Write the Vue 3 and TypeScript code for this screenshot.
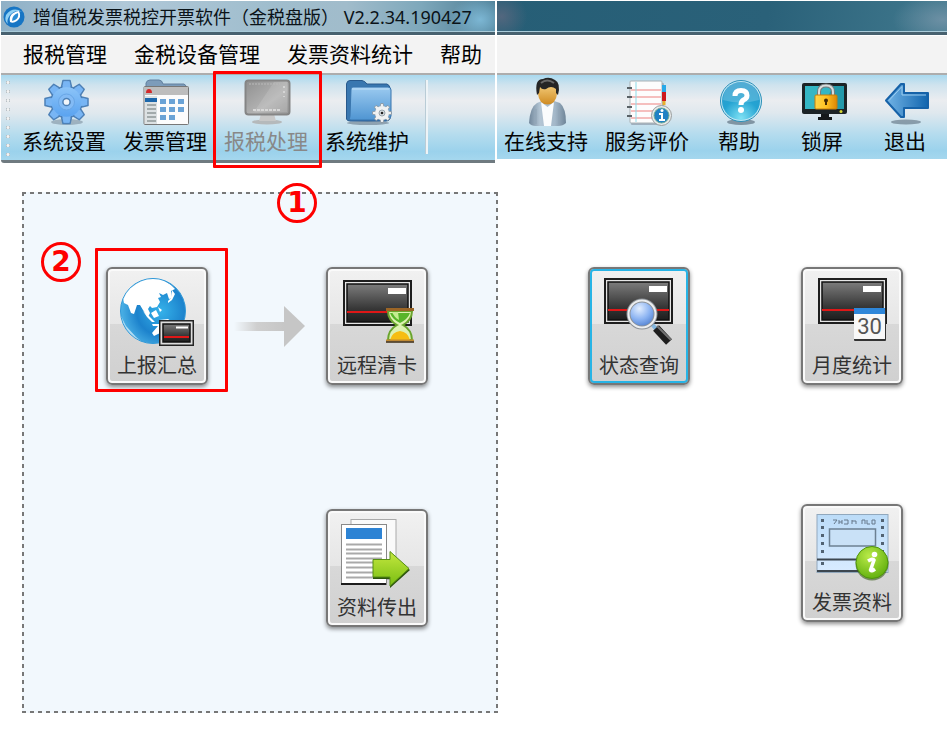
<script setup lang="ts">
interface Action {
  id: string
  label: string
  disabled?: boolean
  marked?: boolean
  day?: string
}

const menus: string[] = ['报税管理', '金税设备管理', '发票资料统计', '帮助']

const mainTools: Action[] = [
  { id: 'gear', label: '系统设置' },
  { id: 'invoices', label: '发票管理' },
  { id: 'monitor', label: '报税处理', disabled: true, marked: true },
  { id: 'folder', label: '系统维护' },
]

const sideTools: Action[] = [
  { id: 'person', label: '在线支持' },
  { id: 'notebook', label: '服务评价' },
  { id: 'help', label: '帮助' },
  { id: 'lock', label: '锁屏' },
  { id: 'exit', label: '退出' },
]

const queryTiles: Action[] = [
  { id: 'status', label: '状态查询', marked: true },
  { id: 'month', label: '月度统计', day: '30' },
  { id: 'paper', label: '发票资料' },
]

const teeth: number[] = [0, 45, 90, 135, 180, 225, 270, 315]
const lineRows: number[] = [35, 40, 44, 49, 53, 58, 63, 68]
const holes: number[] = [16, 23, 31, 39, 47]
</script>

<template>
  <svg class="sprite" aria-hidden="true">
    <defs>
      <linearGradient id="gBlue" x1="0" y1="0" x2="0" y2="1"><stop offset="0" stop-color="#8cc4f8" /><stop offset="1" stop-color="#5aa3f0" /></linearGradient>
      <linearGradient id="gFolder" x1="0" y1="0" x2="0" y2="1"><stop offset="0" stop-color="#9bcaf0" /><stop offset="1" stop-color="#4f95d2" /></linearGradient>
      <linearGradient id="gGrey" x1="0" y1="0" x2="1" y2="1"><stop offset="0" stop-color="#8f8f8f" /><stop offset=".6" stop-color="#b4b4b4" /><stop offset="1" stop-color="#989898" /></linearGradient>
      <linearGradient id="gDevice" x1="0" y1="0" x2="0" y2="1"><stop offset="0" stop-color="#7c7c7c" /><stop offset=".65" stop-color="#373737" /><stop offset="1" stop-color="#1d1d1d" /></linearGradient>
      <radialGradient id="gGlobe" cx=".62" cy=".5" r=".62"><stop offset="0" stop-color="#35b2ea" /><stop offset=".6" stop-color="#1c82cc" /><stop offset="1" stop-color="#4cb2e6" /></radialGradient>
      <linearGradient id="gSuit" x1="0" y1="0" x2="1" y2="0"><stop offset="0" stop-color="#71879b" /><stop offset=".3" stop-color="#b3c5d4" /><stop offset=".7" stop-color="#a4b8c9" /><stop offset="1" stop-color="#6f8598" /></linearGradient>
      <linearGradient id="gFace" x1="0" y1="0" x2="0" y2="1"><stop offset="0" stop-color="#efc470" /><stop offset="1" stop-color="#cf8b22" /></linearGradient>
      <radialGradient id="gHelp" cx=".5" cy=".95" r=".9"><stop offset="0" stop-color="#7fe1f4" /><stop offset=".55" stop-color="#24a3d2" /><stop offset="1" stop-color="#2a9acb" /></radialGradient>
      <linearGradient id="gExit" x1="0" y1="0" x2="1" y2="0"><stop offset="0" stop-color="#72b4e6" /><stop offset="1" stop-color="#1265ae" /></linearGradient>
      <linearGradient id="gGold" x1="0" y1="0" x2="1" y2="0"><stop offset="0" stop-color="#ffd54a" /><stop offset=".5" stop-color="#ffc222" /><stop offset="1" stop-color="#dd8605" /></linearGradient>
      <linearGradient id="gGreen" x1="0" y1="0" x2="0" y2="1"><stop offset="0" stop-color="#c5e83f" /><stop offset="1" stop-color="#78bd12" /></linearGradient>
      <radialGradient id="gInfo" cx=".4" cy=".3" r=".75"><stop offset="0" stop-color="#b9ea48" /><stop offset="1" stop-color="#5fae0c" /></radialGradient>
      <radialGradient id="gLens" cx=".4" cy=".3" r=".8"><stop offset="0" stop-color="#e2eeff" /><stop offset=".5" stop-color="#8bb3f2" /><stop offset="1" stop-color="#3d6fc4" /></radialGradient>
      <linearGradient id="gPaper" x1="0" y1="0" x2="0" y2="1"><stop offset="0" stop-color="#bcdcf8" /><stop offset="1" stop-color="#d8ebff" /></linearGradient>
      <linearGradient id="gFlow" x1="0" y1="0" x2="1" y2="0"><stop offset="0" stop-color="#cfcfcf" stop-opacity="0" /><stop offset=".45" stop-color="#cfcfcf" /><stop offset="1" stop-color="#c6c6c6" /></linearGradient>
    </defs>

    <symbol id="gear" viewBox="0 0 48 48" overflow="visible">
      <ellipse cx="27" cy="44" rx="16" ry="3" fill="#456" opacity=".35" />
      <g fill="#78b5f4" stroke="#4d80b6" stroke-width="1.500">
        <path v-for="a in teeth" :key="a" d="M21 11 L23 2.500 H30 L32 11 Z" :transform="`rotate(${a} 26.5 24)`" stroke-linejoin="round" />
        <circle cx="26.500" cy="24" r="15.500" />
      </g>
      <path v-for="a in teeth" :key="'t' + a" d="M22 12 L23.700 3.500 H29.300 L31 12 Z" :transform="`rotate(${a} 26.5 24)`" fill="#78b5f4" />
      <circle cx="26.500" cy="24" r="14.800" fill="url(#gBlue)" />
      <circle cx="26.500" cy="24" r="8" fill="#83bbf5" stroke="#68a6e6" />
      <circle cx="26.500" cy="24" r="3.600" fill="#f2f6fa" stroke="#4d80b6" stroke-width="1.500" />
    </symbol>

    <symbol id="invoices" viewBox="0 0 48 48" overflow="visible">
      <path d="M5 12 V5 Q6 2 9 2 H18 Q21 2 22 6 H43 Q46 7 46 12Z" fill="#7d9cba" stroke="#607f9e" />
      <rect x="3" y="8.500" width="44.500" height="38" rx="1" fill="#fcfcfc" stroke="#777" />
      <rect x="3.500" y="9" width="43.500" height="8" fill="#bdbdbd" />
      <path d="M5 15 Q5 11 8 11 Q11 11 11 15Z" fill="#d3292a" />
      <rect x="4" y="18" width="12" height="28" fill="#dce1e3" />
      <rect x="4" y="20" width="12" height="4" fill="#1c67ab" />
      <path d="M6 27H15M6 31H15M6 35H15M6 39H15M6 43H15" stroke="#8e9899" stroke-width="1.500" />
      <g fill="#6ba3d6"><rect x="19" y="21" width="6" height="5" /><rect x="28" y="21" width="6" height="5" /><rect x="37" y="21" width="6" height="5" /><rect x="19" y="29" width="6" height="5" /><rect x="28" y="29" width="6" height="5" /><rect x="37" y="29" width="6" height="5" /><rect x="19" y="37" width="6" height="5" /><rect x="28" y="37" width="6" height="5" /></g>
    </symbol>

    <symbol id="monitor" viewBox="0 0 48 48" overflow="visible">
      <ellipse cx="25" cy="44" rx="15" ry="2.500" fill="#b5b9bb" />
      <path d="M19 36 H32 L34 43 H17Z" fill="#c8c8c8" />
      <rect x="3.500" y="2.500" width="44" height="34" rx="3" fill="url(#gGrey)" stroke="#858585" stroke-width="2" />
      <path d="M32 4 H45 V34 H12Z" fill="#fff" opacity=".12" />
      <path d="M7 6H38" stroke="#bababa" stroke-dasharray="2 1" />
      <path d="M11 32H39" stroke="#d8d8d8" stroke-width="2" stroke-dasharray="3 1" />
      <path d="M42 8V19" stroke="#d5d5d5" stroke-width="2" stroke-dasharray="2 3" />
    </symbol>

    <symbol id="folder" viewBox="0 0 48 48" overflow="visible">
      <ellipse cx="25" cy="45" rx="21" ry="2" fill="#345" opacity=".4" />
      <path d="M3.500 41 V6 Q4 2.500 7 2.500 H19 Q22 3 24 6 H44 Q47 7 47 11 V41 Q46 43 43 43 H7 Q4 43 3.500 41Z" fill="#3977b0" stroke="#28598c" />
      <path d="M8 11 Q8 9 10 9 H45 Q48 9 48 12 V38 Q47 42 44 42 H7 Q6 41 7 38Z" fill="url(#gFolder)" stroke="#3975ad" />
      <path d="M9 11H46" stroke="#c1e0f8" />
      <g fill="#f0f2f3" stroke="#87929b" stroke-width=".8">
        <path v-for="a in teeth" :key="a" d="M37 29 L37.800 25.500 H40.200 L41 29Z" :transform="`rotate(${a} 39 35)`" />
      </g>
      <circle cx="39" cy="35" r="7" fill="#f0f2f3" />
      <circle cx="39" cy="35" r="3" fill="#d8dee2" stroke="#98a4ad" /><circle cx="39" cy="35" r="1.300" fill="#222" />
    </symbol>

    <symbol id="person" viewBox="0 0 48 48" overflow="visible">
      <path d="M7 45 Q8 29 15 25 L20 23 H32 L38 25 Q44 30 44 45 Q41 48 36 48 H14 Q9 48 7 45Z" fill="url(#gSuit)" />
      <path d="M19 24 L25.500 29 L32 24 L29 48 H22Z" fill="#fafcfd" />
      <path d="M14 31V46M37 31V46" stroke="#8fa3b4" />
      <path d="M16 9 H35 V16 Q34 26 25.500 26.500 Q17 26 16 16Z" fill="url(#gFace)" />
      <path d="M15 17 Q12 1 21 1 Q27 -2 33 2 Q39 5 36 17 L34 15 V11 Q29 7 24 11 Q20 12 18 9 L17 15Z" fill="#252525" />
      <path d="M19 5 Q25 0 32 5" stroke="#686868" stroke-width="2" fill="none" />
    </symbol>

    <symbol id="notebook" viewBox="0 0 48 48" overflow="visible">
      <rect x="8" y="5" width="33" height="42" rx="1" fill="#556" opacity=".35" />
      <rect x="7" y="3" width="32" height="42" rx="1" fill="#fdfdfd" stroke="#a9b1b5" />
      <path d="M8 12H38M8 19H38M8 26H38M8 33H38M8 40H38" stroke="#f2aaa9" stroke-width="1.500" />
      <path d="M13 4V44" stroke="#8edbe9" />
      <path d="M4 10H9M4 19H9M4 29H9M4 38H9" stroke="#596166" stroke-width="2" />
      <path d="M41 7V14" stroke="#29a9e8" stroke-width="4" /><path d="M41 14V23" stroke="#ce171c" stroke-width="4" /><path d="M41 23V27" stroke="#e8ae2c" stroke-width="3" />
      <circle cx="38.500" cy="37.500" r="10" fill="#e8eaea" stroke="#9a9e9e" />
      <circle cx="38.500" cy="37.500" r="7.500" fill="#2181c4" stroke="#71ad97" />
      <path d="M36 36H39V41M36 42H42" stroke="#fff" stroke-width="2" fill="none" /><circle cx="39" cy="32.500" r="1.500" fill="#fff" />
    </symbol>

    <symbol id="help" viewBox="0 0 48 48" overflow="visible">
      <ellipse cx="26" cy="44" rx="14" ry="3" fill="#456" opacity=".55" />
      <circle cx="26" cy="23" r="20.500" fill="#bfe6f3" stroke="#2a8fb8" />
      <circle cx="26" cy="23" r="19" fill="url(#gHelp)" />
      <path d="M8 22 A18 18 0 0 1 44 22 Q26 27 8 22Z" fill="#fff" opacity=".18" />
      <path d="M20 18 Q20 12.500 26 12.500 Q32 12.500 32 17.500 Q32 20.500 28.500 22 Q26 23.500 26 27" fill="none" stroke="#fff" stroke-width="5" />
      <circle cx="26" cy="32" r="3" fill="#fff" />
    </symbol>

    <symbol id="lock" viewBox="0 0 48 48" overflow="visible">
      <rect x="4" y="5" width="45" height="31" rx="2" fill="#1c2326" />
      <rect x="7" y="8" width="39" height="23" fill="#34b6c4" />
      <path d="M35 8H46V31H24Z" fill="#2399aa" />
      <path d="M23 36H31V39H34V42H20V39H23Z" fill="#15191b" />
      <circle cx="43" cy="33.500" r="1.500" fill="#d6d832" />
      <path d="M21 18 V14 Q21 7.500 28 7.500 Q35 7.500 35 14 V18" fill="none" stroke="#737b7d" stroke-width="4" />
      <path d="M21 18 V14 Q21 7.500 28 7.500 Q35 7.500 35 14 V18" fill="none" stroke="#d8dddd" stroke-width="2" />
      <rect x="17" y="17" width="22" height="14" rx="1" fill="url(#gGold)" stroke="#c77e08" />
      <circle cx="28" cy="22.500" r="2" fill="#462c03" /><path d="M28 22V27" stroke="#462c03" stroke-width="2" />
    </symbol>

    <symbol id="exit" viewBox="0 0 48 48" overflow="visible">
      <ellipse cx="25" cy="44" rx="15" ry="2.500" fill="#456" opacity=".5" />
      <path d="M5 22.500 L20 6 H23 V15 H47 V30 H23 V39 H20Z" fill="url(#gExit)" stroke="#1662a8" stroke-width="2" stroke-linejoin="round" />
      <path d="M8 22.500 L21 8.500 V17 H45" fill="none" stroke="#9bcdf0" />
    </symbol>

    <symbol id="device" viewBox="0 0 69 46" preserveAspectRatio="none">
      <rect x="1" y="1" width="67" height="44" fill="#e6e6e6" stroke="#1e1e1e" stroke-width="2" />
      <rect x="4" y="4" width="61" height="38" fill="url(#gDevice)" stroke="#111" stroke-width="1.500" />
      <rect x="45" y="8" width="18" height="6" fill="#fff" />
      <path d="M4 32H65" stroke="#df1717" stroke-width="2" />
    </symbol>

    <symbol id="globe" viewBox="2 2 98 80">
      <clipPath id="globeClip"><circle cx="47" cy="44" r="32" /></clipPath>
      <circle cx="47" cy="44" r="32.500" fill="url(#gGlobe)" stroke="#3299d8" />
      <g clip-path="url(#globeClip)" fill="#fff">
        <path d="M19 27 L26 18 L35 13 L48 11 L57 13 L65 18 L69 22 L65 24 L66 31 L63 32 L61 26 L57 28 L53 26 L55 30 L52 31 L54 35 L51 40 L46 41 L44 39 L42 42 L44 46 L42 50 L37 43 L34 38 L31 38 L28 47 L25 46 L22 38 L18 36 L17 31Z" />
        <path d="M37 44 L41 50 L46 55 L49 55 L43 49Z M45 46 L50 43 L53 49 L48 51Z M52 40 L56 43 L54 45Z M53 53 L62 52 L68 56 L63 59Z M46 57 H54 L53 59 H47Z M46 66 L52 59 L60 57 L64 62 L61 70 L54 66 L48 69Z M66 23L69 27L66 33L62 36L62 34L65 31Z" />
        <path d="M15 49L20 59L30 70L35 74L27 74L13 60Z" opacity=".6" />
      </g>
      <g><rect x="53" y="53" width="35" height="26" fill="#242424" /><rect x="54.500" y="54.500" width="32" height="23" fill="#ddd" /><rect x="57" y="57" width="27" height="18" fill="url(#gDevice)" stroke="#111" stroke-width="1.500" /><path d="M70 60.500H82" stroke="#fff" stroke-width="2" /><path d="M58 70H83" stroke="#df1717" stroke-width="2" /></g>
    </symbol>

    <symbol id="hourglass" viewBox="2 2 98 80">
      <use href="#device" x="17" y="13" width="69" height="46" />
      <path d="M62 44 H86 Q86 53 77 58 Q86 63 86 73 H62 Q62 63 71 58 Q62 53 62 44Z" fill="#ddf1b1" stroke="#6aa52d" stroke-width="2" />
      <path d="M64 46 H84 Q82 52 74 56 Q66 52 64 46Z" fill="#58b52a" /><path d="M66 45H72L73 53Q68 50 66 45Z" fill="#c4ec91" />
      <path d="M64 73 Q66 65 74 64 Q82 65 84 73Z" fill="#f6bd13" />
      <path d="M60 42.500H88" stroke="#9b6526" stroke-width="3" /><path d="M60 73.500H88" stroke="#c18a32" stroke-width="2" /><path d="M60 75H88" stroke="#3b2b15" stroke-width="1.500" />
    </symbol>

    <symbol id="status" viewBox="2 2 98 80">
      <use href="#device" x="16" y="11" width="69" height="46" />
      <path d="M63 56 L69 63" stroke="#82b6df" stroke-width="4" />
      <path d="M68 61 L81 75" stroke="#1e1e1e" stroke-width="8" />
      <path d="M69 59 L83 73" stroke="#737373" stroke-width="2" />
      <circle cx="54" cy="47" r="13.500" fill="url(#gLens)" stroke="#8d9297" stroke-width="4" />
      <circle cx="54" cy="47" r="13.500" fill="none" stroke="#eceef0" stroke-width="2" />
    </symbol>

    <symbol id="month" viewBox="2 2 98 80">
      <use href="#device" x="17" y="11" width="69" height="46" />
      <rect x="53" y="43" width="32" height="31" rx="1" fill="#333" /><rect x="53" y="41" width="31" height="31" fill="#f8f8f8" />
      <rect x="53" y="41" width="31" height="6" fill="#2e86d9" />
    </symbol>

    <symbol id="export" viewBox="2 2 98 80">
      <rect x="25" y="10.500" width="45" height="60" fill="#fafafa" stroke="#aaa" />
      <rect x="15.500" y="15.500" width="45" height="60" fill="#fff" stroke="#888" />
      <path d="M15 75H60" stroke="#1d1d1d" stroke-width="2" />
      <rect x="20" y="19" width="36" height="11" fill="#2d83d4" />
      <path v-for="y in lineRows" :key="y" :d="`M20 ${y}.500H56`" stroke="#a9a9a9" stroke-width="2" />
      <path d="M47 52 H64 V44 L84 61 L64 79 V70 H47Z" fill="#2d540c" />
      <path d="M47 50.500 H64 V42.500 L83 59.500 L64 77 V68 H47Z" fill="url(#gGreen)" stroke="#568f12" />
    </symbol>

    <symbol id="paper" viewBox="2 2 98 80">
      <rect x="16" y="10.500" width="71" height="58" fill="url(#gPaper)" stroke="#91a8bd" />
      <g v-for="y in holes" :key="y" fill="#526373"><rect x="20" :y="y - 1" width="3" height="3" /><rect x="80" :y="y - 1" width="3" height="3" /></g>
      <rect x="20" y="58" width="3" height="3" fill="#526373" />
      <path d="M32 16H36L33 20M38 16V20M38 18H41M41 16V20M43 16H47V20H43M51 16V20M51 17H55V20M61 20V16H64V20M66 16V20H69M71 16V20M71 16H74V20H71" fill="none" stroke="#66798b" />
      <rect x="28.500" y="25" width="46" height="17" fill="#c9e1f7" stroke="#6c8092" stroke-width="1.500" />
      <path d="M16 55.500H58M16 67H60" stroke="#3d4750" stroke-width="2" />
      <circle cx="71" cy="60" r="16.500" fill="#365a12" opacity=".6" />
      <circle cx="71" cy="58.500" r="16" fill="url(#gInfo)" stroke="#4f960a" />
      <circle cx="73.500" cy="50.500" r="2.800" fill="#fff" /><path d="M67 57 Q72 54 73 56 L69.500 66 Q70 68 74 65" fill="none" stroke="#fff" stroke-width="3.500" />
    </symbol>
  </svg>

  <header class="top">
    <section class="pane pane-main">
      <div class="title title-main">
        <svg class="logo" viewBox="0 0 22 22" aria-hidden="true">
          <circle cx="11" cy="11" r="10.500" fill="#1775c4" />
          <path d="M3 9 Q10 0 19 6 Q13 3 7 9 Q3 15 5 18 Q1 15 3 9Z" fill="#8fd0f4" />
          <path d="M7 16 Q5 7 16 5 Q19 11 14 15 Q10 18 7 16Z" fill="#fff" />
          <path d="M9 15 Q9 9 15 7 Q16 12 12 14Z" fill="#2c8dd5" />
        </svg>
        <h1>增值税发票税控开票软件（金税盘版） V2.2.34.190427</h1>
      </div>
      <nav class="menu">
        <a v-for="m in menus" :key="m" href="#">{{ m }}</a>
      </nav>
      <div class="tools tools-main">
        <button v-for="t in mainTools" :key="t.id" type="button" class="tool" :disabled="t.disabled">
          <svg class="tool-icon" aria-hidden="true"><use :href="'#' + t.id" width="48" height="48" /></svg>
          <span>{{ t.label }}</span>
          <i v-if="t.marked" class="frame frame-tool"></i>
        </button>
        <span class="rule"></span>
      </div>
    </section>
    <section class="pane pane-side">
      <div class="title title-side"></div>
      <div class="menu"></div>
      <div class="tools tools-side">
        <button v-for="t in sideTools" :key="t.id" type="button" class="tool">
          <svg class="tool-icon" aria-hidden="true"><use :href="'#' + t.id" width="48" height="48" /></svg>
          <span>{{ t.label }}</span>
        </button>
      </div>
    </section>
  </header>

  <main class="work">
    <section class="flow">
      <button type="button" class="tile">
        <svg class="tile-icon" aria-hidden="true"><use href="#globe" width="98" height="80" /></svg>
        <span>上报汇总</span>
        <i class="frame frame-tile"></i>
      </button>
      <svg class="arrow" viewBox="0 0 118 44" aria-hidden="true">
        <rect x="26" y="18" width="51" height="9" fill="url(#gFlow)" />
        <path d="M76 2L97 22L76 43Z" fill="#c6c6c6" />
      </svg>
      <button type="button" class="tile">
        <svg class="tile-icon" aria-hidden="true"><use href="#hourglass" width="98" height="80" /></svg>
        <span>远程清卡</span>
      </button>
      <button type="button" class="tile tile-export">
        <svg class="tile-icon" aria-hidden="true"><use href="#export" width="98" height="80" /></svg>
        <span>资料传出</span>
      </button>
      <b class="step step-one">1</b>
      <b class="step step-two">2</b>
    </section>
    <section class="queries">
      <button v-for="q in queryTiles" :key="q.id" type="button" class="tile" :class="{ focus: q.marked, last: q.id === 'paper' }">
        <svg class="tile-icon" aria-hidden="true"><use :href="'#' + q.id" width="98" height="80" /></svg>
        <span>{{ q.label }}</span>
        <span v-if="q.day" class="day">{{ q.day }}</span>
      </button>
    </section>
  </main>
</template>

<style>
body {
  margin: 0;
  background: #fff;
  font-family: "Noto Sans", "Noto Sans CJK SC", sans-serif;
}
</style>

<style scoped>
.sprite { position: absolute; width: 0; height: 0; }
button { font-family: inherit; margin: 0; padding: 0; border: 0; background: none; }

.top {
  display: grid;
  grid-template-columns: 494fr 450fr;
  gap: 2px;
  align-items: start;
  padding: 1px 0 0 1px;
}
.pane { min-width: 0; }
.title {
  display: flex;
  align-items: center;
  gap: 8px;
  height: 31px;
  padding-left: 2px;
  border-bottom: 3px solid #47616f;
  box-shadow: inset 0 -1px #a9cbd9;
}
.title-main {
  background:
    radial-gradient(ellipse 30px 24px at 97% 60%, rgba(128, 188, 218, 0.9), transparent),
    linear-gradient(90deg, #8fb0c6 0%, #b0c8d8 25%, #9fbdcd 55%, #a1bccb 70%, #7ea8bb 85%, #4c7c93 100%);
}
.title-side {
  background:
    radial-gradient(ellipse 26px 24px at 1% 50%, rgba(93, 105, 128, 0.8), transparent),
    radial-gradient(ellipse 50px 26px at 99% 60%, rgba(120, 150, 170, 0.8), transparent),
    linear-gradient(100deg, #265e76 0%, #2a6179 60%, #41798e 100%);
}
.logo { width: 22px; height: 22px; flex: none; }
h1 {
  margin: 0;
  font-size: 18px;
  line-height: 30px;
  font-weight: 400;
  white-space: pre;
  color: #0b1318;
}
.menu {
  display: flex;
  gap: 27px;
  height: 37px;
  padding-left: 22px;
  border-top: 1px solid #fff;
  border-bottom: 2px solid #adadad;
  background: #f3f3f3;
}
.menu a {
  color: #000;
  font-size: 21px;
  line-height: 36px;
  text-decoration: none;
  white-space: nowrap;
}
.tools {
  display: flex;
  gap: 17px;
  padding-top: 3px;
  background: linear-gradient(180deg, #a9d9ef 0%, #cfe3ee 12%, #ebedf0 30%, #dfe8ee 45%, #b5dcee 70%, #9bd2ec 90%, #a5d7ee 100%);
}
.tools-main {
  padding-left: 21px;
  padding-bottom: 4px;
  border-bottom: 3px solid #6f7a80;
  border-bottom-left-radius: 3px;
  background:
    radial-gradient(circle, #f4f4f4 1px, #a9b4ba 2px, transparent 2px) 4px 3px / 6px 9px repeat-y,
    linear-gradient(180deg, #a9d9ef 0%, #cfe3ee 12%, #ebedf0 30%, #dfe8ee 45%, #b5dcee 70%, #9bd2ec 90%, #a5d7ee 100%);
}
.tools-side { padding-left: 7px; padding-bottom: 3px; }
.tool {
  position: relative;
  display: flex;
  flex-direction: column;
  align-items: center;
  min-width: 66px;
  font-size: 21px;
  line-height: 30px;
  white-space: nowrap;
  color: #050505;
}
.tool:disabled { color: #888; }
.tool-icon { width: 48px; height: 48px; overflow: visible; }
.rule { width: 2px; height: 74px; margin-top: 2px; background: #eef4f7; box-shadow: -1px 0 #b9ccd6; }

.frame { position: absolute; border: 3px solid #fe0000; border-radius: 1px; }
.frame-tool { inset: -7px -14px -12px -11px; }
.frame-tile { inset: -21px -22px -9px -13px; }

.work {
  display: grid;
  grid-template-columns: 476fr 449fr;
  align-items: start;
  padding: 29px 0 26px 22px;
}
.flow, .queries {
  display: grid;
  grid-template-columns: 102px 102px;
  padding-top: 75px;
}
.flow {
  position: relative;
  grid-template-columns: 102px 118px 102px;
  row-gap: 124px;
  padding-left: 84px;
  padding-bottom: 86px;
  background:
    linear-gradient(90deg, #777 56%, transparent 56%) 0 0 / 8px 2px repeat-x,
    linear-gradient(90deg, #777 56%, transparent 56%) 0 100% / 8px 2px repeat-x,
    linear-gradient(180deg, #777 56%, transparent 56%) 0 0 / 2px 8px repeat-y,
    linear-gradient(180deg, #777 56%, transparent 56%) 100% 0 / 2px 8px repeat-y,
    #f2f8fd;
}
.queries { gap: 119px 111px; padding-left: 90px; }
.tile {
  position: relative;
  display: flex;
  flex-direction: column;
  align-items: center;
  height: 118px;
  box-sizing: border-box;
  border: 2px solid #777;
  border-radius: 6px;
  background: linear-gradient(180deg, #f1f1f1 0%, #e6e6e6 48%, #d8d8d8 48%, #d0d0d0 100%);
  box-shadow: inset 0 0 0 2px #fafafa, 0 2px 4px rgba(0, 0, 0, 0.45);
  font-size: 20px;
  line-height: 34px;
  white-space: nowrap;
  color: #333;
}
.tile.focus { box-shadow: inset 0 0 0 2px #27b4e6, 0 2px 4px rgba(0, 0, 0, 0.45); }
.tile-icon { width: 98px; height: 80px; flex: none; }
.tile-export { grid-column: 3; }
.last { grid-column: 2; }
.day {
  position: absolute;
  left: 51px;
  top: 46px;
  width: 31px;
  text-align: center;
  font: 400 22px/24px Roboto, sans-serif;
  color: #555;
}
.arrow { width: 118px; height: 44px; margin-top: 37px; }

.step {
  position: absolute;
  width: 40px;
  height: 40px;
  box-sizing: border-box;
  border: 3px solid #fe0000;
  border-radius: 50%;
  font: 700 28px/34px "DejaVu Sans", sans-serif;
  text-align: center;
  color: #fe0000;
}
.step-one { left: 255px; top: -9px; }
.step-two { left: 19px; top: 50px; }
</style>
